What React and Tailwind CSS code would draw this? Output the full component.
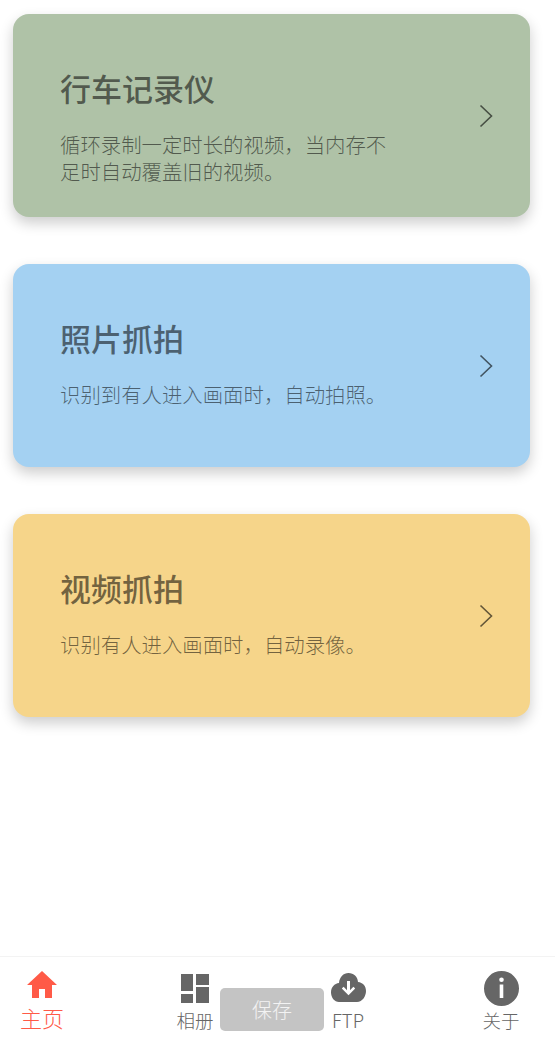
const cards = [
  { title: '行车记录仪', desc: '循环录制一定时长的视频，当内存不足时自动覆盖旧的视频。', color: 'bg-[#afc2a7]' },
  { title: '照片抓拍', desc: '识别到有人进入画面时，自动拍照。', color: 'bg-[#a4d1f2]' },
  { title: '视频抓拍', desc: '识别有人进入画面时，自动录像。', color: 'bg-[#f6d58a]' },
]

const Card = ({ title, desc, color }) => (
  <div className={`flex h-[203px] items-center justify-between rounded-[16px] pl-[47px] pr-[37px] shadow-[0_6px_14px_rgba(0,0,0,0.2)] ${color}`}>
    <div className="w-[335px] self-start pt-[54px]">
      <h2 className="text-[31px] leading-[40px] font-medium text-black/55">{title}</h2>
      <p className="mt-[23px] text-[20.4px] leading-[27px] font-light text-black/55">{desc}</p>
    </div>
    <svg width="14" height="24" viewBox="0 0 14 24" fill="none" className="text-black/60">
      <path d="M1.5 1.5 12.5 12 1.5 22.5" stroke="currentColor" strokeWidth="1.6" />
    </svg>
  </div>
)

const NavItem = ({ icon, label, active, className }) => (
  <div className={`flex flex-col items-center ${active ? 'text-[#ff5a47]' : 'text-[#666666]'} ${className}`}>
    <div className={`flex items-center justify-center ${active ? 'h-[30px]' : 'h-[36px]'}`}>{icon}</div>
    <span className={active ? 'mt-[3px] text-[22px] leading-[28px] font-light' : 'mt-[1px] text-[18.5px] leading-[26px] font-light'}>{label}</span>
  </div>
)

const HomeIcon = () => (
  <svg width="30" height="28" viewBox="0 0 30 28" fill="currentColor">
    <path d="M15 0 30 14H25V27H18V18H12V27H5V14H0Z" />
  </svg>
)

const GridIcon = () => (
  <svg width="28" height="29" viewBox="0 0 28 29" fill="currentColor">
    <path d="M0 0H12V17H0ZM15 0H28V11H15ZM15 13H28V29H15ZM0 20H12V29H0Z" />
  </svg>
)

const CloudIcon = () => (
  <svg width="35" height="30" viewBox="0 0 35 30" fill="currentColor">
    <path fillRule="evenodd" d="M17.5 0C22.8 0 26.6 3.600 27 9 31.800 9.500 35 13 35 18 35 23 31.500 29 26 29H8C3.500 29 0 24.500 0 19.500 0 14 3.500 10.500 8 10 8.500 4 12.500 0 17.500 0ZM16 8V17.200L12.600 13.800 10.800 15.600 17.500 22.200 24.200 15.600 22.400 13.800 19 17.200V8Z" />
  </svg>
)

const InfoIcon = () => (
  <svg width="35" height="35" viewBox="0 0 35 35" fill="currentColor">
    <path fillRule="evenodd" d="M17.500 0A17.500 17.500 0 1 1 17.500 35 17.500 17.500 0 0 1 17.500 0ZM17.500 6.500A2.300 2.300 0 1 0 17.500 11.100 2.300 2.300 0 0 0 17.500 6.500ZM15.700 13.500V27H19.300V13.500Z" />
  </svg>
)

export default function App() {
  return (
    <div className="relative flex h-[1049px] w-[555px] flex-col overflow-hidden bg-white font-['Noto_Sans_CJK_SC','Noto_Sans',sans-serif]">
      <div className="flex flex-1 flex-col gap-[47px] pt-[14px] pr-[25px] pl-[13px]">
        {cards.map(card => <Card key={card.title} {...card} />)}
      </div>
      <div className="relative h-[93px] border-t border-[#f3f3f3] pt-[13px]">
        <div className="flex">
          <NavItem icon={<HomeIcon />} label="主页" active className="ml-[20px] w-[44px]" />
          <NavItem icon={<GridIcon />} label="相册" className="ml-[109px] w-[44px]" />
          <NavItem icon={<CloudIcon />} label="FTP" className="ml-[109px] w-[44px]" />
          <NavItem icon={<InfoIcon />} label="关于" className="ml-[109px] w-[44px]" />
        </div>
        <button className="absolute top-[31px] left-[220px] h-[43px] w-[104px] rounded-[5px] bg-[#c4c4c4] text-[20px] font-light text-white/80">
          保存
        </button>
      </div>
    </div>
  )
}
